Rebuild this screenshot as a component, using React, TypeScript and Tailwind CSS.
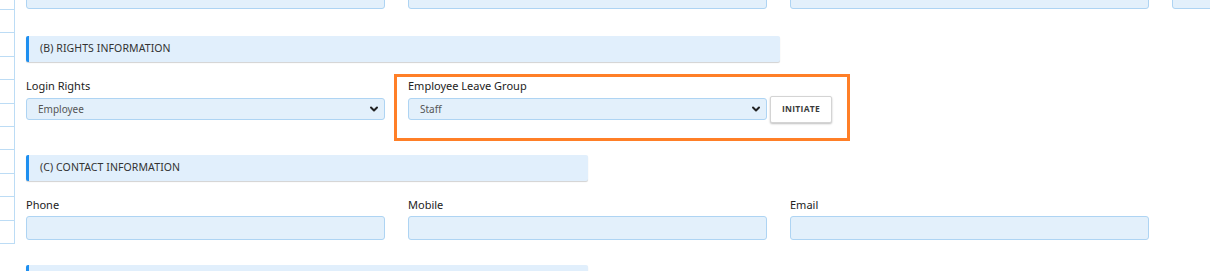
import { ChevronDown } from "lucide-react";

const font = { fontFamily: "'Noto Sans', 'Open Sans', sans-serif" };

function SectionHeader({ title, width }: { title: string; width: string }) {
  return (
    <div
      className={`${width} h-[26px] flex items-center bg-[#e1effc] border-l-[3px] border-[#1e8ff0] rounded-[2px] shadow-[0_1px_1px_rgba(0,0,0,0.18)] pl-[11px]`}
    >
      <span className="text-[10.5px] text-[#333] tracking-[0.1px]">{title}</span>
    </div>
  );
}

function SelectBox({ value }: { value: string }) {
  return (
    <div className="w-[359px] h-[22px] flex items-center justify-between bg-[#e3f0fb] border border-[#aed4f3] rounded-[3px] pl-[11px] pr-[4px]">
      <span className="text-[10px] text-[#555]">{value}</span>
      <ChevronDown size={12} strokeWidth={4} className="text-[#222]" />
    </div>
  );
}

function TextBox() {
  return <div className="w-[359px] h-[24px] bg-[#e3f0fb] border border-[#aed4f3] rounded-[3px]" />;
}

export default function App() {
  return (
    <div className="w-[1210px] h-[271px] overflow-hidden bg-white flex" style={font}>
      {/* cut-off table on the left */}
      <div className="w-[15px] shrink-0 flex flex-col">
        <div className="border-r border-[#bcdcf5]">
          {Array.from({ length: 11 }).map((_, i) => (
            <div key={i} className={`${i === 0 ? "h-[10px]" : "h-[23.4px]"} border-b border-[#bcdcf5]`} />
          ))}
        </div>
      </div>

      <div className="pl-[11px] flex flex-col">
        {/* previous row, cut off */}
        <div className="flex gap-[23px] -mt-[15px]">
          <TextBox />
          <div className="w-[359px] h-[24px] bg-[#e3f0fb] border border-[#aed4f3] rounded-[3px] pl-[11px] text-[10px] leading-[16px] text-[#555]">Select</div>
          <div className="w-[359px] h-[24px] bg-[#e3f0fb] border border-[#aed4f3] rounded-[3px] pl-[11px] text-[10px] leading-[16px] text-[#555]">BHAKTAPUR</div>
          <div className="w-[359px] h-[24px] bg-[#e3f0fb] border border-[#aed4f3] rounded-[3px] pl-[11px] text-[10px] leading-[16px] text-[#555]">Select</div>
        </div>

        <div className="mt-[27px]">
          <SectionHeader title="(B) RIGHTS INFORMATION" width="w-[754px]" />
        </div>

        <div className="flex gap-[23px] mt-[16px]">
          <div className="flex flex-col">
            <label className="text-[11px] text-[#222] leading-[15px]">Login Rights</label>
            <div className="mt-[5px]">
              <SelectBox value="Employee" />
            </div>
          </div>
          <div className="relative flex flex-col">
            <label className="text-[11px] text-[#222] leading-[15px]">Employee Leave Group</label>
            <div className="mt-[5px] h-[22px] flex items-center gap-[3px]">
              <SelectBox value="Staff" />
              <button
                className="w-[62px] h-[27px] shrink-0 bg-white border border-[#d4d4d4] rounded-[2px] shadow-[0_1px_2px_rgba(0,0,0,0.25)] text-[8.5px] font-bold text-[#3a3a3a] tracking-[0.3px]"
                style={{ fontFamily: "'Open Sans', 'Liberation Sans', sans-serif" }}
              >
                INITIATE
              </button>
            </div>
            <div className="absolute left-[-14px] top-[-4px] w-[456px] h-[67px] border-[3px] border-[#ff7f27]" />
          </div>
        </div>

        <div className="mt-[35px]">
          <SectionHeader title="(C) CONTACT INFORMATION" width="w-[562px]" />
        </div>

        <div className="flex gap-[23px] mt-[16px]">
          {["Phone", "Mobile", "Email"].map((l) => (
            <div key={l} className="flex flex-col">
              <label className="text-[11px] text-[#222] leading-[15px]">{l}</label>
              <div className="mt-[4px]">
                <TextBox />
              </div>
            </div>
          ))}
        </div>

        <div className="mt-[25px]">
          <SectionHeader title="(D) OTHER INFORMATION" width="w-[562px]" />
        </div>
      </div>
    </div>
  );
}
